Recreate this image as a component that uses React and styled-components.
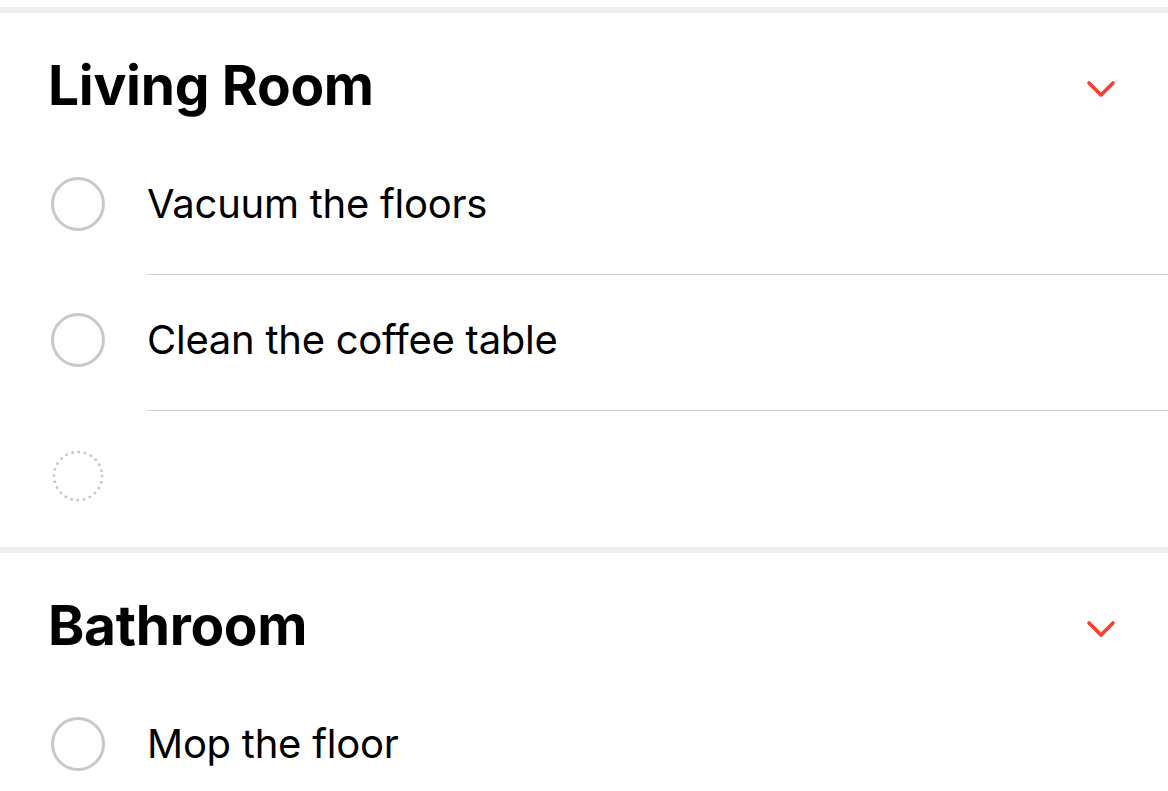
import React from "react";
import styled, { createGlobalStyle } from "styled-components";

const Global = createGlobalStyle`
  html, body { margin: 0; padding: 0; background: #ffffff; }
  body { font-family: Inter, "Noto Sans", "Liberation Sans", sans-serif; color: #000; -webkit-font-smoothing: antialiased; }
`;

const Page = styled.div`
  width: 1168px;
  height: 791px;
  overflow: hidden;
  padding-top: 7px;
  box-sizing: border-box;
  background: #ffffff;
`;

const Section = styled.section`
  border-top: 6px solid #efefef;
`;

const Header = styled.div`
  height: 126px;
  display: flex;
  align-items: center;
  justify-content: space-between;
  padding: 26px 52px 0 48px;
  box-sizing: border-box;
`;

const Title = styled.h2`
  margin: 0;
  font-size: 55px;
  font-weight: 700;
  letter-spacing: -0.3px;
  line-height: 1;
  transform: translateY(-4px);
`;

const Chevron = styled.svg`
  width: 30px;
  height: 18px;
  display: block;
`;

const Row = styled.div`
  display: flex;
  height: 136px;
`;

const CheckCol = styled.div`
  width: 147px;
  flex: none;
  box-sizing: border-box;
  padding: 0 0 7px 51px;
  display: flex;
  align-items: center;
`;

const Circle = styled.div`
  width: 54px;
  height: 54px;
  box-sizing: border-box;
  border-radius: 50%;
  border: 3px solid #c8c8c8;
`;

const Body = styled.div`
  flex: 1;
  display: flex;
  align-items: center;
  padding-bottom: 7px;
  box-sizing: border-box;
  border-bottom: ${(p) => (p.$last ? "1px solid transparent" : "1px solid #cfcfcf")};
`;

const Label = styled.span`
  font-size: 40px;
  font-weight: 400;
  letter-spacing: -0.25px;
`;

const DottedCircle = () => (
  <svg width="54" height="54" viewBox="0 0 54 54" style={{ display: "block" }}>
    <circle
      cx="27"
      cy="27"
      r="24"
      fill="none"
      stroke="#c8c8c8"
      strokeWidth="3"
      strokeLinecap="round"
      strokeDasharray="0 6.2832"
    />
  </svg>
);

const ChevronIcon = () => (
  <Chevron viewBox="0 0 30 18">
    <polyline
      points="3,3 15,15 27,3"
      fill="none"
      stroke="#ff3b30"
      strokeWidth="3.6"
      strokeLinecap="round"
      strokeLinejoin="round"
    />
  </Chevron>
);

const sections = [
  { title: "Living Room", items: ["Vacuum the floors", "Clean the coffee table"], add: true },
  { title: "Bathroom", items: ["Mop the floor"], add: false },
];

export default function App() {
  return (
    <Page>
      <Global />
      {sections.map((s) => (
        <Section key={s.title}>
          <Header>
            <Title>{s.title}</Title>
            <ChevronIcon />
          </Header>
          {s.items.map((it) => (
            <Row key={it}>
              <CheckCol>
                <Circle />
              </CheckCol>
              <Body>
                <Label>{it}</Label>
              </Body>
            </Row>
          ))}
          {s.add && (
            <Row>
              <CheckCol>
                <DottedCircle />
              </CheckCol>
              <Body $last />
            </Row>
          )}
        </Section>
      ))}
    </Page>
  );
}
